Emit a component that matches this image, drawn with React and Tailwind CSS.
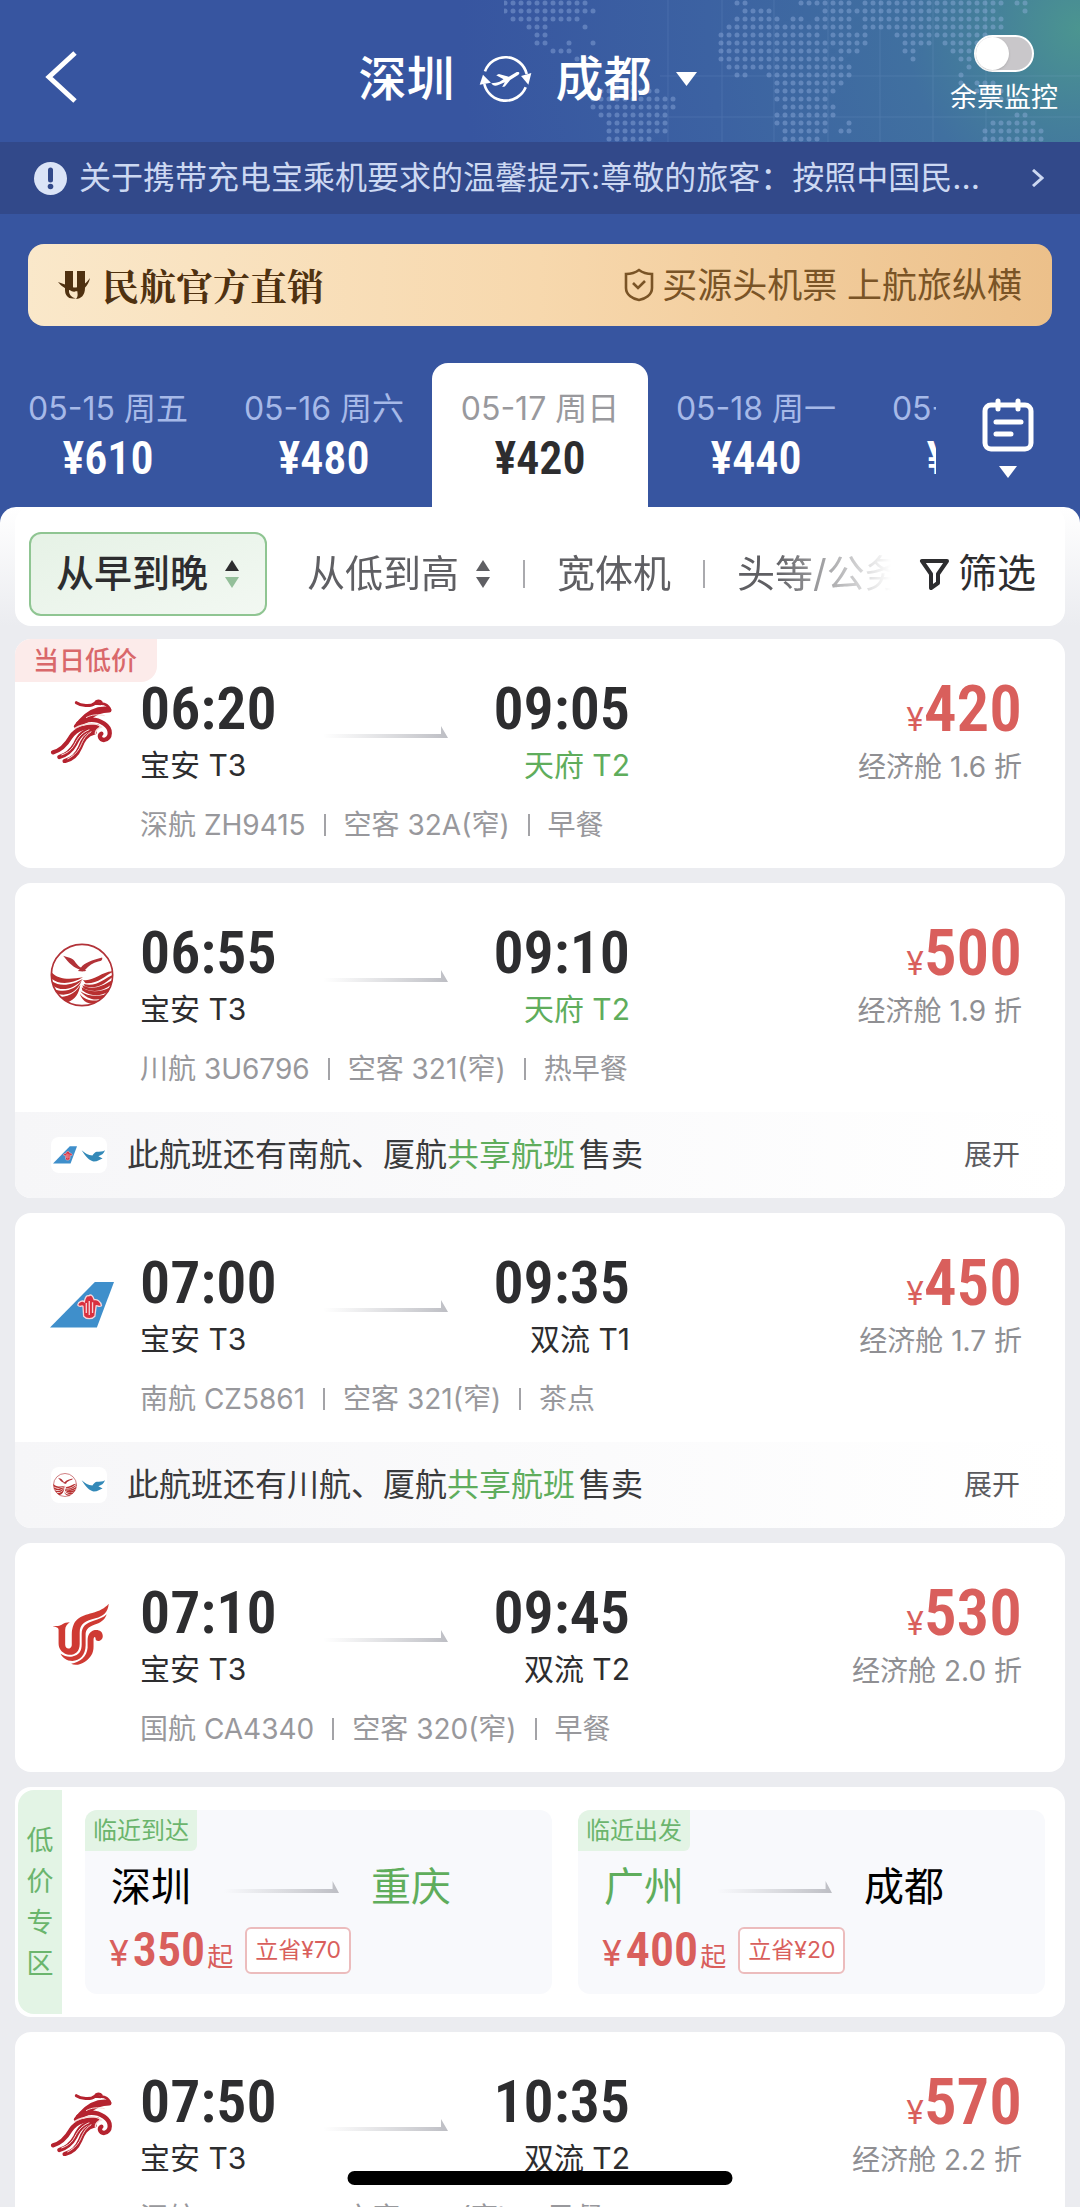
// App.jsx
import { useState } from "react";

const dates = [
  { label: "05-15 周五", price: "610" },
  { label: "05-16 周六", price: "480" },
  { label: "05-17 周日", price: "420" },
  { label: "05-18 周一", price: "440" },
  { label: "05-19 周二", price: "450" },
];

const flights = [
  {
    airline: "shenzhen",
    depart: "06:20",
    arrive: "09:05",
    from: "宝安 T3",
    to: "天府 T2",
    highlight: true,
    price: "420",
    discount: "1.6",
    details: ["深航 ZH9415", "空客 32A(窄)", "早餐"],
    lowest: true,
  },
  {
    airline: "sichuan",
    depart: "06:55",
    arrive: "09:10",
    from: "宝安 T3",
    to: "天府 T2",
    highlight: true,
    price: "500",
    discount: "1.9",
    details: ["川航 3U6796", "空客 321(窄)", "热早餐"],
    share: { logos: ["southern", "xiamen"], names: "南航、厦航" },
  },
  {
    airline: "southern",
    depart: "07:00",
    arrive: "09:35",
    from: "宝安 T3",
    to: "双流 T1",
    price: "450",
    discount: "1.7",
    details: ["南航 CZ5861", "空客 321(窄)", "茶点"],
    share: { logos: ["sichuan", "xiamen"], names: "川航、厦航" },
  },
  {
    airline: "airchina",
    depart: "07:10",
    arrive: "09:45",
    from: "宝安 T3",
    to: "双流 T2",
    price: "530",
    discount: "2.0",
    details: ["国航 CA4340", "空客 320(窄)", "早餐"],
  },
];

const lastFlight = {
  airline: "shenzhen",
  depart: "07:50",
  arrive: "10:35",
  from: "宝安 T3",
  to: "双流 T2",
  price: "570",
  discount: "2.2",
  details: ["深航 ZH9481", "空客 320(窄)", "早餐"],
};

const deals = [
  { tag: "临近到达", from: "深圳", to: "重庆", green: "to", price: "350", save: "70" },
  { tag: "临近出发", from: "广州", to: "成都", green: "from", price: "400", save: "20" },
];

// Dotted world map: every row is a list of [first, last] column runs
const mapRows = [
  [[0, 10], [29, 30], [37, 43], [45, 62], [64, 65]],
  [[0, 11], [30, 33], [40, 61], [65, 65]],
  [[1, 9], [29, 34], [36, 37], [39, 43], [45, 62]],
  [[3, 5], [10, 10], [28, 43], [45, 62]],
  [[4, 5], [27, 39], [41, 45], [49, 60]],
  [[4, 5], [8, 8], [11, 11], [27, 45], [50, 53], [55, 59]],
  [[6, 8], [27, 40], [42, 44], [50, 51], [56, 58]],
  [[9, 10], [27, 42], [51, 51], [57, 58]],
  [[28, 43], [58, 58]],
  [[29, 30], [33, 43], [57, 57]],
  [[13, 16], [34, 42], [57, 57], [59, 61]],
  [[12, 19], [34, 41], [58, 62]],
  [[11, 21], [34, 40], [61, 64]],
  [[11, 21], [35, 41]],
  [[12, 20], [34, 41], [64, 65]],
  [[13, 20], [34, 40], [43, 43], [61, 66]],
  [[13, 20], [35, 40], [42, 43], [60, 67]],
  [[13, 18], [35, 39], [60, 67]],
];

const numeric = "font-['Roboto_Condensed',Roboto,sans-serif]";

function WorldMap() {
  return (
    <svg className="absolute top-0 right-0 h-[142px] w-[576px]" viewBox="504 0 576 142">
      <g fill="#9db8e6" opacity="0.38">
        {mapRows.flatMap((runs, r) =>
          runs.flatMap(([a, b]) =>
            Array.from({ length: b - a + 1 }, (_, i) => (
              <circle key={`${r}-${a + i}`} cx={505 + (a + i) * 8} cy={3 + r * 8} r="2.5" />
            ))
          )
        )}
      </g>
      <g stroke="#a8c4ee" strokeWidth="1" opacity="0.12">
        <path d="M668 0V142M722 0V142M774 0V142M828 0V142M880 0V142M933 0V142M986 0V142M660 76H1080M660 117H1080" />
      </g>
    </svg>
  );
}

function SwapIcon() {
  return (
    <svg className="h-[50px] w-[53px]" viewBox="0 160 160 150" fill="none">
      <path d="M18 212A66 66 0 0 1 144 220" stroke="#fff" strokeWidth="8" />
      <path d="M141 260A66 66 0 0 1 16 250" stroke="#fff" strokeWidth="8" />
      <path d="M127 226L158 217L149 252Z" fill="#fff" />
      <path d="M2 252L12 222L36 246Z" fill="#fff" />
      <path
        d="M37 248C46 246 56 246 62 243L74 236L52 224L60 220L90 228L114 214C122 212 125 218 118 223L94 238L78 258L70 259L78 245L60 252C50 257 42 256 37 248Z"
        fill="#fff"
      />
    </svg>
  );
}

function AirlineLogo({ name, className }) {
  if (name === "shenzhen") {
    return (
      <svg className={className} viewBox="58 54 192 192" fill="none">
        <g stroke="#b5232f" strokeLinecap="round" strokeLinejoin="round">
          <path d="M137 65C150 74 180 78 192 67L210 68" strokeWidth="9" />
          <path d="M196 62C206 56 214 62 212 68C222 68 232 72 238 86" strokeWidth="8" />
          <path d="M234 84C205 80 175 92 150 120L136 136" strokeWidth="13" />
          <path d="M236 88C212 88 190 98 176 112C166 122 152 126 138 136" strokeWidth="13" />
          <path d="M142 128C168 114 196 112 220 128C244 144 242 172 220 177C208 176 204 164 212 158" strokeWidth="13" />
          <path d="M200 136C165 136 138 142 120 168C106 192 92 208 67 214" strokeWidth="13" />
          <path d="M196 142C160 146 146 162 134 188C122 210 106 222 86 228" strokeWidth="13" />
          <path d="M192 154C166 160 156 178 148 200C138 224 122 236 102 240" strokeWidth="13" />
        </g>
        <path d="M132 142C160 126 192 122 212 138C200 142 194 150 194 160" stroke="#f8dcd9" strokeWidth="4" />
        <path
          d="M166 110C184 100 202 100 222 104M176 146C146 158 140 176 128 196C120 208 110 216 92 222M182 152C160 166 156 182 146 202C138 216 124 228 110 234"
          stroke="#f8dcd9"
          strokeWidth="3"
        />
      </svg>
    );
  }
  if (name === "sichuan") {
    return (
      <svg className={className} viewBox="58 64 194 194" fill="none">
        <circle cx="155" cy="161" r="93" fill="#fff" stroke="#b23238" strokeWidth="5" />
        <path
          d="M98 103C108 108 128 108 136 124C142 132 148 138 152 138C162 124 186 116 216 108C218 114 214 120 204 120C188 124 176 132 164 146C174 148 164 152 142 149L148 144C132 142 114 124 98 103Z"
          fill="#b23238"
        />
        <g fill="#b83030">
          <path d="M62 152C84 178 124 174 158 168C122 190 84 190 63 172Z" />
          <path d="M64 180C92 200 132 188 158 172C132 204 92 212 68 194Z" />
          <path d="M72 204C104 216 136 204 154 178C140 216 108 226 82 218Z" />
          <path d="M90 228C120 226 140 210 150 190C146 218 134 236 110 244Z" />
          <path d="M248 152C224 164 204 188 166 186L158 176C188 182 214 152 246 150Z" />
          <path d="M249 166C230 180 208 206 164 196L160 188C200 198 220 172 249 160Z" />
          <path d="M244 190C220 210 192 216 160 202L156 192C184 208 216 196 247 176Z" />
          <path d="M234 212C212 226 184 228 156 208L154 198C180 216 214 212 240 198Z" />
          <path d="M216 232C192 240 168 232 150 210C170 224 196 228 226 220Z" />
          <path d="M190 248C172 250 156 240 148 218C162 236 180 240 204 238Z" />
        </g>
      </svg>
    );
  }
  if (name === "southern") {
    return (
      <svg className={className} viewBox="58 35 194 194" fill="none">
        <path d="M194 62H252L200 200H58Z" fill="#3f8fcb" />
        <g fill="#d9303f" stroke="#f6d5da" strokeWidth="4">
          <path d="M142 132C144 120 158 118 162 122C164 108 170 102 176 104C182 98 188 104 192 116C200 114 212 120 214 134C206 140 200 132 198 134L194 166C186 176 168 176 160 166L158 136C154 132 148 142 142 132Z" />
        </g>
        <path d="M168 126V156M177 120V162M187 124V156" stroke="#f6d5da" strokeWidth="4" />
      </svg>
    );
  }
  if (name === "airchina") {
    return (
      <svg className={className} viewBox="60 64 194 194" fill="none">
        <g fill="#cf3a33">
          <path d="M84 134C96 132 100 122 120 122C112 128 106 134 106 146V190C106 206 124 206 126 192V160C128 110 152 104 188 94C210 88 226 80 238 66C236 92 222 104 198 110C168 118 150 126 150 154V188C150 214 132 224 112 220C94 214 86 202 86 186V146C86 138 80 138 68 134Z" />
          <path d="M232 98C226 116 212 124 194 130C174 138 168 146 168 160V192C168 222 150 238 128 240C110 240 98 230 92 218C104 226 116 228 128 226C148 222 156 210 156 190V158C156 134 170 126 192 118C208 112 222 108 232 98Z" />
          <path d="M220 164C220 150 208 144 196 146C180 150 174 162 174 178V200C172 226 152 244 124 248C134 254 152 252 166 242C184 230 192 216 192 196V176C192 168 196 164 198 170C196 184 220 182 220 164Z" />
        </g>
      </svg>
    );
  }
  return (
    <svg className={className} viewBox="150 640 80 80" fill="none">
      <path
        d="M152 664C164 674 174 681 188 682C192 676 196 671 202 669C212 668 222 670 230 664C226 676 218 680 208 684L222 692C214 695 206 702 192 702C178 698 168 688 152 664Z"
        fill="#3389b8"
      />
    </svg>
  );
}

function RouteArrow({ id, className }) {
  return (
    <svg className={className} viewBox="0 0 125 12" preserveAspectRatio="none">
      <defs>
        <linearGradient id={id} x1="0" x2="1" y1="0" y2="0">
          <stop offset="0" stopColor="#c4c5c9" stopOpacity="0" />
          <stop offset="1" stopColor="#bdbec4" />
        </linearGradient>
      </defs>
      <path d="M0 8H118V0L125 12H0Z" fill={`url(#${id})`} />
    </svg>
  );
}

function SortArrows({ down }) {
  return (
    <svg className="h-7 w-4" viewBox="0 0 16 28">
      <path d="M8 0L15 11H1Z" fill="currentColor" />
      <path d="M8 28L15 17H1Z" fill={down} />
    </svg>
  );
}

function FlightCard({ flight, id }) {
  return (
    <article className="relative shrink-0 overflow-hidden rounded-2xl bg-white">
      {flight.lowest && (
        <span className="absolute top-0 left-0 rounded-br-2xl bg-[#fcebea] pr-5 pl-[18px] text-[26px] leading-[43px] font-medium text-[#d9686a]">
          当日低价
        </span>
      )}
      <div className="flex pt-10 pr-[43px] pb-[23px]">
        <div className="w-[125px] shrink-0 pt-5 pl-[35px]">
          <AirlineLogo name={flight.airline} className="size-16" />
        </div>
        <div className="grow">
          <div className="flex">
            <div className="flex w-[490px] justify-between">
              <div>
                <p className={`text-[60px] leading-[60px] font-semibold text-[#2d2d2f] ${numeric}`}>{flight.depart}</p>
                <p className="mt-1.5 text-[30px] leading-10 text-[#2d2d2f]">{flight.from}</p>
              </div>
              <RouteArrow id={`route-${id}`} className="mt-[47px] h-3 w-[125px]" />
              <div className="text-right">
                <p className={`text-[60px] leading-[60px] font-semibold text-[#2d2d2f] ${numeric}`}>{flight.arrive}</p>
                <p className={`mt-1.5 text-[30px] leading-10 ${flight.highlight ? "text-[#5fad5c]" : "text-[#2d2d2f]"}`}>
                  {flight.to}
                </p>
              </div>
            </div>
            <div className="grow text-right">
              <p className="flex items-baseline justify-end text-[#d95f5c]">
                <span className="text-[32px] leading-8">¥</span>
                <span className={`text-[65px] leading-[60px] font-semibold ${numeric}`}>{flight.price}</span>
              </p>
              <p className="mt-2 text-[28px] leading-10 text-[#8f8f93]">经济舱 {flight.discount} 折</p>
            </div>
          </div>
          <p className="mt-[18px] flex items-center text-[28px] leading-10 text-[#98989c]">
            {flight.details.map((text, i) => (
              <span key={text} className="flex items-center">
                {i > 0 && <span className="mx-[18px] h-[22px] w-0.5 bg-[#a3a3a7]" />}
                {text}
              </span>
            ))}
          </p>
        </div>
      </div>
      {flight.share && (
        <div className="flex h-[86px] items-center bg-linear-to-r from-[#f6f6f8] to-white pr-[45px] pl-9">
          <div className="flex h-9 items-center gap-1 rounded-lg bg-white px-0.5">
            {flight.share.logos.map((name) => (
              <AirlineLogo key={name} name={name} className="size-6" />
            ))}
          </div>
          <p className="ml-5 grow text-[32px] leading-10 text-[#3a3a3c]">
            此航班还有{flight.share.names}
            <span className="mr-1 text-[#5fad5c]">共享航班</span>售卖
          </p>
          <button className="text-[28px] leading-10 text-[#5a5a5e]">展开</button>
        </div>
      )}
    </article>
  );
}

function DealCard() {
  return (
    <section className="flex shrink-0 rounded-2xl bg-white py-[3px] pr-5 pl-[3px]">
      <h2 className="flex w-11 flex-col items-center justify-center rounded-l-2xl bg-[#e3f4e5] text-[27px] leading-[41px] text-[#6bb56d]">
        {[..."低价专区"].map((char) => (
          <span key={char}>{char}</span>
        ))}
      </h2>
      <div className="my-5 ml-[23px] grid grow grid-cols-2 gap-[26px]">
        {deals.map((deal, i) => (
          <a key={deal.tag} href="#deal" className="block overflow-hidden rounded-xl bg-[#f8f9fc] pb-5">
            <span className="inline-block rounded-br-md bg-[#e3f4e5] px-2 align-top text-[24px] leading-[41px] text-[#6bb56d]">
              {deal.tag}
            </span>
            <div className="mt-[9px] ml-[26px] flex w-[340px] items-center justify-between text-[40px] leading-[54px] text-black">
              <span className={deal.green === "from" ? "text-[#5fad5c]" : ""}>{deal.from}</span>
              <RouteArrow id={`deal-${i}`} className="h-3 w-[115px]" />
              <span className={deal.green === "to" ? "text-[#5fad5c]" : ""}>{deal.to}</span>
            </div>
            <div className="mt-3 ml-6 flex h-12 items-center">
              <p className="flex items-baseline text-[#d95f5c]">
                <span className="mr-1 text-[36px] leading-9">¥</span>
                <span className={`text-[48px] leading-[48px] font-semibold ${numeric}`}>{deal.price}</span>
                <span className="ml-0.5 text-[26px] leading-7">起</span>
              </p>
              <span className="ml-3 rounded-md border-2 border-[#ecbcbd] bg-white px-2 text-[23px] leading-[43px] text-[#d95f5c]">
                立省¥{deal.save}
              </span>
            </div>
          </a>
        ))}
      </div>
    </section>
  );
}

export default function App() {
  const [selected, setSelected] = useState(2);
  const [monitor, setMonitor] = useState(false);

  return (
    <div className="h-screen overflow-hidden bg-[#ebecf0] font-['Inter','Noto_Sans_CJK_SC',sans-serif]">
      <div className="relative bg-[#3755a0]">
        {/* Route title */}
        <header className="relative flex h-[142px] items-center justify-between bg-[radial-gradient(circle_620px_at_100%_20%,#4b9590_0%,#45819a_14%,#4070a0_28%,#3c62a2_60%,#3755a0_100%)] pr-[22px] pl-[42px]">
          <WorldMap />
          <button aria-label="返回" className="relative w-[63px] pt-3">
            <svg className="h-14 w-10" viewBox="0 0 40 56" fill="none">
              <path d="M33 4L7 28L33 52" stroke="#fff" strokeWidth="5" />
            </svg>
          </button>
          <button className="relative flex items-center pt-4 text-[48px] leading-[58px] font-medium text-white">
            深圳
            <span className="mx-6">
              <SwapIcon />
            </span>
            成都
            <svg className="ml-6 h-[14px] w-[21px]" viewBox="0 0 21 14">
              <path d="M0 0H21L10.500 14Z" fill="#fff" />
            </svg>
          </button>
          <label className="relative flex flex-col items-center pt-2 text-[27px] leading-9 text-white">
            <span className="relative mb-2 block h-[37px] w-[60px]">
              <input
                type="checkbox"
                checked={monitor}
                onChange={() => setMonitor(!monitor)}
                className="peer block size-full appearance-none rounded-full border-2 border-white bg-[#c9c7ca] checked:bg-[#5fad5c]"
              />
              <span className="pointer-events-none absolute top-0.5 left-0.5 size-[33px] rounded-full bg-white shadow peer-checked:left-[25px]" />
            </span>
            余票监控
          </label>
        </header>

        {/* Notice */}
        <a href="#notice" className="flex h-[72px] items-center bg-[#32498a] pr-9 pl-[34px] text-[#ccd8f2]">
          <svg className="size-[33px] shrink-0" viewBox="0 0 33 33">
            <circle cx="16.500" cy="16.500" r="16.500" fill="#dbe4f7" />
            <path d="M16.500 8V18" stroke="#32498a" strokeWidth="5" strokeLinecap="round" />
            <circle cx="16.500" cy="24.500" r="2.800" fill="#32498a" />
          </svg>
          <span className="ml-3 grow text-[32px] leading-10 whitespace-nowrap">
            关于携带充电宝乘机要求的温馨提示:尊敬的旅客：按照中国民...
          </span>
          <svg className="h-[18px] w-3 shrink-0" viewBox="0 0 12 18" fill="none">
            <path d="M1 1L10 9L1 17" stroke="currentColor" strokeWidth="3" />
          </svg>
        </a>

        {/* Official sales banner */}
        <a
          href="#official"
          className="mx-7 mt-[30px] flex h-[82px] items-center justify-between rounded-2xl bg-linear-to-r from-[#fae8ca] via-[#f7d8ad] to-[#ecc08a] px-[30px] text-[#7a5426]"
        >
          <span className="flex items-center gap-3 font-['Noto_Serif_CJK_SC','Noto_Sans_CJK_SC',serif] text-[37px] leading-[48px] font-bold text-[#4f3110]">
            <svg className="h-[30px] w-8" viewBox="0 0 32 30" fill="#4f3110">
              <path d="M7 1H15V17C15 20 16 21 18 22C15 22 12 21 11 18L11 22C12 26 15 28 18 28C11 30 7 26 7 20Z" />
              <path d="M19 1H27V18C27 25 23 29 18 29C21 26 19 22 19 18Z" />
              <path d="M0 12L14 17C21 19 27 15 32 8C30 17 24 22 16 21C9 20 4 17 0 12Z" />
            </svg>
            民航官方直销
          </span>
          <span className="flex items-center gap-2 text-[35px] leading-[48px]">
            <svg className="h-[34px] w-[30px]" viewBox="0 0 30 34" fill="none" stroke="currentColor" strokeWidth="2.600">
              <path d="M15 2C19 5 23 6 28 6V20C28 27 21 31 15 32C9 31 2 27 2 20V6C7 6 11 5 15 2Z" />
              <path d="M9 15L14 20L21 13" />
            </svg>
            买源头机票 上航旅纵横
          </span>
        </a>

        {/* Date tabs */}
        <nav className="mt-[37px] flex">
          <div className="flex min-w-0 grow overflow-hidden">
            {dates.map((date, i) => (
              <button
                key={date.label}
                onClick={() => setSelected(i)}
                className={`h-36 w-[216px] shrink-0 rounded-t-2xl text-center ${i === selected ? "bg-white" : ""}`}
              >
                <span
                  className={`block text-[32px] leading-[46px] whitespace-nowrap ${i === selected ? "text-[#99999d]" : "text-[#a6b9e8]"}`}
                >
                  {date.label}
                </span>
                <span
                  className={`block text-[46px] leading-[52px] font-semibold ${numeric} ${i === selected ? "text-[#2d2d2f]" : "text-white"}`}
                >
                  ¥{date.price}
                </span>
              </button>
            ))}
          </div>
          <button aria-label="日历" className="flex w-36 shrink-0 flex-col items-center gap-3.5 pt-[35px]">
            <svg className="h-[54px] w-[52px]" viewBox="0 0 52 54" fill="none" stroke="#fff" strokeWidth="5" strokeLinecap="round">
              <rect x="3" y="7" width="46" height="44" rx="6" />
              <path d="M16 3V11M36 3V11M14 24H39M14 36H29" />
            </svg>
            <svg className="h-3 w-[18px]" viewBox="0 0 18 12">
              <path d="M0 0H18L9 12Z" fill="#fff" />
            </svg>
          </button>
        </nav>
      </div>

      {/* Sort and filter */}
      <div className="bg-[#3755a0]">
        <div className="rounded-t-2xl bg-linear-to-b from-white to-[#ebecf0] px-[15px]">
          <div className="flex h-[119px] items-center rounded-2xl bg-white pt-3.5 pr-[29px] pl-3.5">
            <button className="flex h-[84px] shrink-0 items-center gap-4 rounded-xl border-2 border-[#8fc592] bg-linear-to-br from-[#e6f2e6] to-[#f2f8f2] px-[25px] text-[38px] font-medium text-[#2d2d2f]">
              从早到晚
              <SortArrows down="#93bf99" />
            </button>
            <div className="ml-10 flex min-w-0 grow items-center overflow-hidden mask-r-from-80% text-[38px] whitespace-nowrap text-[#5f5f63]">
              <button className="flex items-center gap-4">
                从低到高
                <SortArrows down="#5f5f63" />
              </button>
              <span className="mx-8 h-7 w-0.5 shrink-0 bg-[#aaaaae]" />
              <button>宽体机</button>
              <span className="mx-8 h-7 w-0.5 shrink-0 bg-[#aaaaae]" />
              <button>头等/公务舱</button>
            </div>
            <button className="ml-7 flex shrink-0 items-center gap-2 text-[39px] text-[#2d2d2f]">
              <svg className="h-8 w-[31px]" viewBox="0 0 31 32" fill="none" stroke="currentColor" strokeWidth="4">
                <path d="M3 3H28L19 16V25L12 30V16Z" strokeLinejoin="round" />
              </svg>
              筛选
            </button>
          </div>
        </div>
      </div>

      {/* Results */}
      <main className="flex flex-col gap-[15px] px-[15px] pt-[13px]">
        {flights.map((flight, i) => (
          <FlightCard key={flight.details[0]} flight={flight} id={i} />
        ))}
        <DealCard />
        <FlightCard flight={lastFlight} id="last" />
      </main>

      {/* Home indicator */}
      <div className="fixed bottom-[22px] left-1/2 h-3.5 w-[385px] -translate-x-1/2 rounded-full bg-black" />
    </div>
  );
}
